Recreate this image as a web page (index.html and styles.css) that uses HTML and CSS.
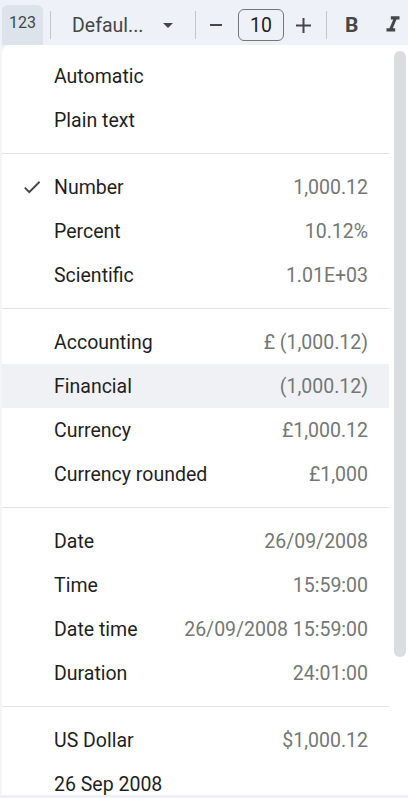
FILE: index.html
```html
<!DOCTYPE html>
<html>
<head>
  <meta charset="UTF-8">
  <title>Number format menu</title>
  <link rel="stylesheet" href="styles.css">
</head>
<body>
  <div class="toolbar">
    <div class="tool-format">123</div>
    <div class="tool-sep"></div>
    <div class="tool-font">Defaul...</div>
    <div class="tool-arrow"></div>
    <div class="tool-sep sep-after-font"></div>
    <svg class="tool-minus" width="12" height="12" viewBox="0 0 12 12"><path d="M0 6h12" stroke="#444746" stroke-width="2"/></svg>
    <div class="tool-size">10</div>
    <svg class="tool-plus" width="15" height="15" viewBox="0 0 15 15"><path d="M0 7.5h15M7.5 0v15" stroke="#444746" stroke-width="2"/></svg>
    <div class="tool-sep sep-after-size"></div>
    <div class="tool-bold">B</div>
    <svg class="tool-italic" width="26" height="26" viewBox="0 0 24 24"><path d="M10 4v3h2.21l-3.42 8H6v3h8v-3h-2.21l3.42-8H18V4z" fill="#444746"/></svg>
  </div>

  <div class="sheet">
    <div class="sheet-edge"></div>
    <div class="menu">
      <div class="menu-list">
        <div class="item"><span class="label">Automatic</span></div>
        <div class="item"><span class="label">Plain text</span></div>
        <div class="divider"></div>
        <div class="item">
          <svg class="check" width="22" height="22" viewBox="0 0 24 24"><path d="M9 16.17L4.83 12l-1.42 1.41L9 19 21 7l-1.41-1.41z" fill="#444746"/></svg>
          <span class="label">Number</span><span class="value">1,000.12</span>
        </div>
        <div class="item"><span class="label">Percent</span><span class="value">10.12%</span></div>
        <div class="item"><span class="label">Scientific</span><span class="value">1.01E+03</span></div>
        <div class="divider"></div>
        <div class="item"><span class="label">Accounting</span><span class="value">£ (1,000.12)</span></div>
        <div class="item hover"><span class="label">Financial</span><span class="value">(1,000.12)</span></div>
        <div class="item"><span class="label">Currency</span><span class="value">£1,000.12</span></div>
        <div class="item"><span class="label">Currency rounded</span><span class="value">£1,000</span></div>
        <div class="divider"></div>
        <div class="item"><span class="label">Date</span><span class="value">26/09/2008</span></div>
        <div class="item"><span class="label">Time</span><span class="value">15:59:00</span></div>
        <div class="item"><span class="label">Date time</span><span class="value">26/09/2008 15:59:00</span></div>
        <div class="item"><span class="label">Duration</span><span class="value">24:01:00</span></div>
        <div class="divider"></div>
        <div class="item"><span class="label">US Dollar</span><span class="value">$1,000.12</span></div>
        <div class="item"><span class="label">26 Sep 2008</span></div>
      </div>
      <div class="scroll-track">
        <div class="scroll-thumb"></div>
      </div>
    </div>
  </div>
</body>
</html>
```

FILE: styles.css
```css
body {
  margin: 0;
  background-color: #eef1f7;
  font-family: Roboto, "Liberation Sans", sans-serif;
  color: #1f1f1f;
  overflow: hidden;
}
.toolbar {
  height: 45px;
  box-sizing: border-box;
  padding-top: 5px;
  display: flex;
  align-items: center;
  color: #444746;
}
.tool-format {
  align-self: stretch;
  margin-left: 2px;
  width: 41px;
  padding-bottom: 6px;
  box-sizing: border-box;
  background-color: #dde3ea;
  border-radius: 6px 6px 0 0;
  font-size: 16px;
  display: flex;
  align-items: center;
  justify-content: center;
}
.tool-sep {
  width: 1px;
  height: 28px;
  margin-left: 7px;
  background-color: #c4c7c5;
}
.tool-font {
  margin-left: 21px;
  width: 72px;
  font-size: 19.5px;
  white-space: nowrap;
}
.tool-arrow {
  margin-left: 19px;
  width: 0;
  height: 0;
  border-left: 5px solid transparent;
  border-right: 5px solid transparent;
  border-top: 5px solid #444746;
}
.sep-after-font {
  margin-left: 22px;
}
.tool-minus {
  margin-left: 14px;
}
.tool-size {
  margin-left: 16px;
  width: 46px;
  height: 32px;
  box-sizing: border-box;
  border: 1px solid #747775;
  border-radius: 6px;
  font-size: 19.5px;
  color: #1f1f1f;
  display: flex;
  align-items: center;
  justify-content: center;
}
.tool-plus {
  margin-left: 12px;
}
.sep-after-size {
  margin-left: 15px;
}
.tool-bold {
  margin-left: 18px;
  width: 16px;
  font-size: 21px;
  font-weight: bold;
}
.tool-italic {
  margin-left: 19px;
}
.sheet {
  display: flex;
  height: 750px;
}
.sheet-edge {
  width: 2px;
  background-color: #f4f5f7;
}
.menu {
  flex: 1;
  display: flex;
  background-color: #ffffff;
  border-radius: 8px 0 0 0;
  overflow: hidden;
}
.menu-list {
  width: 387px;
  padding-top: 9px;
}
.item {
  position: relative;
  height: 44px;
  display: flex;
  align-items: center;
  justify-content: space-between;
  padding: 0 21px 0 52px;
  font-size: 19.5px;
}
.item.hover {
  background-color: #f0f1f4;
}
.check {
  position: absolute;
  left: 19px;
  top: 11px;
}
.value {
  color: #747775;
}
.divider {
  height: 1px;
  margin: 11px 0;
  background-color: #e1e3e1;
}
.scroll-track {
  flex: 1;
  padding: 6px 2px 0 5px;
}
.scroll-thumb {
  height: 606px;
  background-color: #dadce0;
  border-radius: 6px;
}
```
